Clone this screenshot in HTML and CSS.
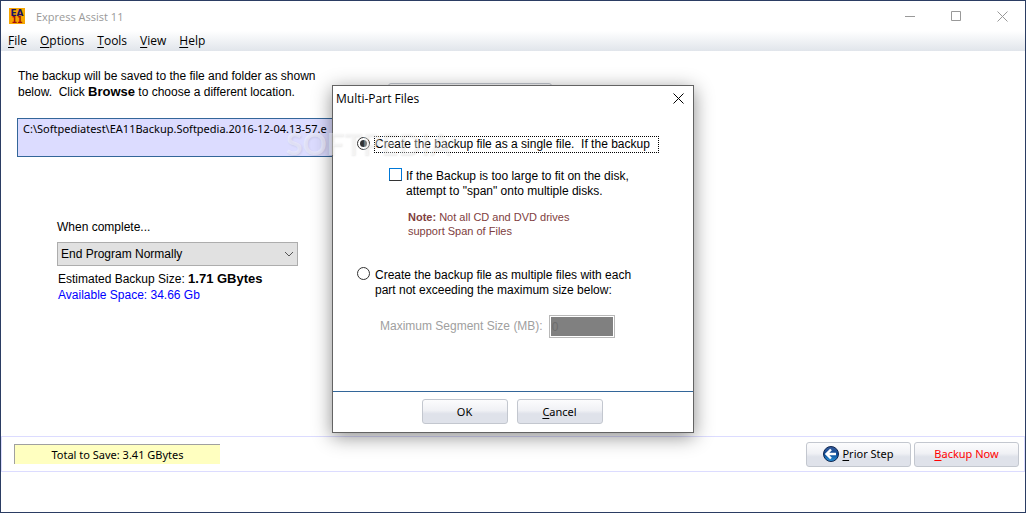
FILE: index.html
```html
<!DOCTYPE html>
<html lang="en">
<head>
    <meta charset="UTF-8">
    <meta name="viewport" content="width=device-width, initial-scale=1.0">
    <title>Express Assist 11</title>
    <link rel="stylesheet" href="styles.css">
</head>
<body>
    <div class="window">
        <header class="title-bar">
            <svg class="app-icon" viewBox="0 0 16 16" aria-hidden="true">
                <rect width="16" height="16" fill="#f7a600"/>
                <text x="8" y="8" class="icon-top">EA</text>
                <text x="8" y="15" class="icon-bottom">11</text>
            </svg>
            <h1 class="app-title">Express Assist 11</h1>
            <div class="window-buttons">
                <button class="window-button" aria-label="Minimize">
                    <svg viewBox="0 0 11 11"><path d="M0 5.5h10"/></svg>
                </button>
                <button class="window-button" aria-label="Maximize">
                    <svg viewBox="0 0 11 11"><path d="M.5 .5h9v9h-9z"/></svg>
                </button>
                <button class="window-button" aria-label="Close">
                    <svg viewBox="0 0 11 11"><path d="M.5 .5l10 10M10.5 .5l-10 10"/></svg>
                </button>
            </div>
        </header>

        <nav class="menu-bar">
            <button><u>F</u>ile</button>
            <button><u>O</u>ptions</button>
            <button><u>T</u>ools</button>
            <button><u>V</u>iew</button>
            <button><u>H</u>elp</button>
        </nav>

        <main class="content">
            <div class="destination">
                <p class="intro">The backup will be saved to the file and folder as shown<br>below.&nbsp; Click <b>Browse</b> to choose a different location.</p>
                <button class="push browse" aria-label="Browse"></button>
            </div>
            <div class="path-box">C:\Softpediatest\EA11Backup.Softpedia.2016-12-04.13-57.e</div>

            <div class="finish">
                <label for="whenComplete">When complete...</label>
                <select id="whenComplete">
                    <option>End Program Normally</option>
                </select>
                <p>Estimated Backup Size: <b>1.71 GBytes</b></p>
                <p class="available">Available Space: 34.66 Gb</p>
            </div>
        </main>

        <footer class="bottom-bar">
            <div class="total">Total to Save: 3.41 GBytes</div>
            <button class="push step">
                <svg class="back-icon" viewBox="0 0 16 16" aria-hidden="true">
                    <defs>
                        <linearGradient id="ball" x1="0" y1="0" x2="0" y2="1">
                            <stop offset="0" stop-color="#3a5c9c"/>
                            <stop offset=".5" stop-color="#0c4a94"/>
                            <stop offset="1" stop-color="#2a95dc"/>
                        </linearGradient>
                    </defs>
                    <circle cx="8" cy="8" r="7.5" fill="url(#ball)" stroke="#10264f"/>
                    <path d="M8 3.5L3.5 8L8 12.5M4 8h9" fill="none" stroke="#fff" stroke-width="2.4"/>
                </svg>
                <span><u>P</u>rior Step</span>
            </button>
            <button class="push step backup-now"><span><u>B</u>ackup Now</span></button>
        </footer>
    </div>

    <div class="overlay">
        <form class="dialog" role="dialog" aria-labelledby="dialogTitle">
            <div class="dialog-title">
                <h2 id="dialogTitle">Multi-Part Files</h2>
                <button type="button" class="dialog-close" aria-label="Close">
                    <svg viewBox="0 0 11 11"><path d="M.5 .5l10 10M10.5 .5l-10 10"/></svg>
                </button>
            </div>
            <div class="dialog-body">
                <div class="choice">
                    <input type="radio" name="split" id="single" checked>
                    <label for="single" class="focused">Create the backup file as a single file.&nbsp; If the backup</label>
                </div>
                <div class="choice span-choice">
                    <input type="checkbox" id="span">
                    <label for="span">If the Backup is too large to fit on the disk,<br>attempt to "span" onto multiple disks.</label>
                </div>
                <p class="note"><b>Note:</b> Not all CD and DVD drives<br>support Span of Files</p>
                <div class="choice">
                    <input type="radio" name="split" id="multiple">
                    <label for="multiple">Create the backup file as multiple files with each<br>part not exceeding the maximum size below:</label>
                </div>
                <div class="segment">
                    <label for="segmentSize">Maximum Segment Size (MB):</label>
                    <input type="text" id="segmentSize" value="0" disabled>
                </div>
            </div>
            <div class="dialog-actions">
                <button type="button" class="push">OK</button>
                <button type="button" class="push"><span><u>C</u>ancel</span></button>
            </div>
            <div class="watermark" aria-hidden="true">SOFTPEDIA<sup>®</sup></div>
        </form>
    </div>
</body>
</html>
```

FILE: styles.css
```css
* {
    box-sizing: border-box;
}

body {
    margin: 0;
    font-family: "Liberation Sans", Arial, sans-serif;
    font-size: 12px;
    line-height: 16px;
    color: #000;
    background: #fff;
}

p, h1, h2 {
    margin: 0;
}

button, input, select {
    font: inherit;
    color: inherit;
}

button {
    border: none;
    background: none;
    padding: 0;
}

u {
    text-underline-offset: 2px;
}

.window {
    display: flex;
    flex-direction: column;
    min-height: 100vh;
    border: 1px solid #2b3d63;
}

.title-bar {
    display: flex;
    align-items: center;
    height: 30px;
    padding-left: 8px;
}

.app-icon {
    width: 16px;
    height: 16px;
    font-family: "DejaVu Sans", sans-serif;
    font-weight: bold;
    text-anchor: middle;
}

.icon-top {
    font-size: 9px;
    fill: #1b1464;
}

.icon-bottom {
    font-size: 8px;
    fill: #a01010;
}

.app-title {
    flex: 1;
    padding-left: 11px;
    font: 11px "Open Sans", sans-serif;
    color: #999;
}

.window-buttons {
    display: flex;
}

.window-button {
    width: 46px;
    height: 29px;
}

.window-button svg,
.dialog-close svg {
    display: block;
    width: 11px;
    height: 11px;
    margin: 0 auto;
    fill: none;
    stroke: #999;
}

.menu-bar {
    display: flex;
    gap: 13px;
    height: 20px;
    padding-left: 7px;
    background: linear-gradient(#fff, #e1e5eb);
    font-family: "Open Sans", sans-serif;
    font-size: 12px;
}

.content {
    flex: 1;
    padding: 17px 16px 0;
}

.content b {
    font-size: 13px;
}

.destination {
    display: flex;
    padding-left: 1px;
}

.intro {
    width: 370px;
}

.path-box {
    width: 536px;
    height: 39px;
    margin-top: 10px;
    padding: 2px 5px;
    border: 1px solid #336699;
    background: #dcdcff;
    font-family: "Noto Sans", sans-serif;
    font-size: 11px;
}

.finish {
    padding: 62px 0 0 40px;
}

.finish label {
    display: block;
    margin-bottom: 7px;
}

.finish select {
    display: block;
    appearance: none;
    width: 241px;
    height: 24px;
    margin-bottom: 5px;
    padding: 0 3px;
    border: 1px solid #adadad;
    border-radius: 0;
    background: #e1e1e1 url("data:image/svg+xml,%3Csvg xmlns='http://www.w3.org/2000/svg' width='10' height='6'%3E%3Cpath d='M1 1l4 4 4-4' fill='none' stroke='%23555'/%3E%3C/svg%3E") no-repeat right 3px center;
}

.finish p {
    padding-left: 1px;
}

.available {
    color: #0000ff;
}

.bottom-bar {
    display: flex;
    align-items: center;
    gap: 3px;
    height: 36px;
    margin-bottom: 40px;
    padding: 0 5px 0 12px;
    border: 1px solid #dcdcff;
    font-family: "Noto Sans", sans-serif;
    font-size: 11px;
}

.total {
    width: 206px;
    height: 20px;
    margin-right: auto;
    border-top: 1px solid #a0a0a0;
    border-left: 1px solid #a0a0a0;
    background: #ffffc0;
    line-height: 20px;
    text-align: center;
}

.push {
    display: inline-flex;
    align-items: center;
    justify-content: center;
    gap: 3px;
    width: 86px;
    height: 25px;
    border: 1px solid #c3c7cf;
    border-radius: 3px;
    background: linear-gradient(#fcfcfd, #f0f1f5 45%, #dfe2ea 60%, #dfe2ea);
    font-family: "Noto Sans", sans-serif;
    font-size: 11px;
}

.browse {
    width: 164px;
    margin-top: 15px;
}

.step {
    width: 105px;
}

.backup-now {
    color: #ff0000;
}

.back-icon {
    width: 16px;
    height: 16px;
}

.overlay {
    position: absolute;
    inset: 0;
    display: flex;
    justify-content: center;
    align-items: flex-start;
    padding-top: 85px;
}

.dialog {
    position: relative;
    width: 362px;
    border: 1px solid #636363;
    background: #fff;
    box-shadow: 0 4px 18px rgba(0, 0, 0, 0.45);
}

.dialog-title {
    display: flex;
    align-items: center;
    justify-content: space-between;
    height: 24px;
    padding: 0 9px 0 3px;
}

.dialog-title h2 {
    font: 12px "Open Sans", sans-serif;
}

.dialog-close svg {
    stroke: #000;
}

.dialog-body {
    padding: 27px 24px 53px;
    line-height: 15px;
}

.choice {
    display: flex;
    align-items: flex-start;
    gap: 5px;
}

.choice input {
    appearance: none;
    flex: none;
    width: 13px;
    height: 13px;
    margin: 0;
    border: 1px solid #333;
    background: #fff;
}

.choice input[type="radio"] {
    border-radius: 50%;
}

.choice input[type="radio"]:checked {
    padding: 2px;
    background: #333 content-box;
}

.choice input[type="checkbox"] {
    border-color: #0078d7 #0078d7 #333;
}

.choice label {
    padding-top: 1px;
}

.choice .focused {
    padding: 0 8px 0 0;
    outline: 1px dotted #000;
}

.span-choice {
    padding: 16px 0 0 32px;
    gap: 4px;
}

.note {
    padding: 11px 0 29px 51px;
    font-size: 11px;
    line-height: 14px;
    color: #804040;
}

.segment {
    display: flex;
    align-items: center;
    gap: 6px;
    padding: 17px 0 0 23px;
    color: #a0a0a0;
}

.segment input {
    width: 66px;
    height: 23px;
    padding: 0 2px;
    border: 1px solid #b8b8b8;
    outline: 1px solid #fff;
    outline-offset: -2px;
    background: #808080;
    color: #6d6d6d;
}

.dialog-actions {
    display: flex;
    justify-content: center;
    gap: 9px;
    padding: 7px 2px 8px 0;
    border-top: 1px solid #336699;
}

.watermark {
    position: absolute;
    left: -47px;
    top: 34px;
    font-family: Lato, sans-serif;
    font-size: 30px;
    font-weight: bold;
    line-height: 40px;
    color: rgba(255, 255, 255, 0.4);
    text-shadow: 1px 1px 2px rgba(0, 0, 0, 0.08);
    pointer-events: none;
}

.watermark sup {
    font-size: 10px;
}
```
